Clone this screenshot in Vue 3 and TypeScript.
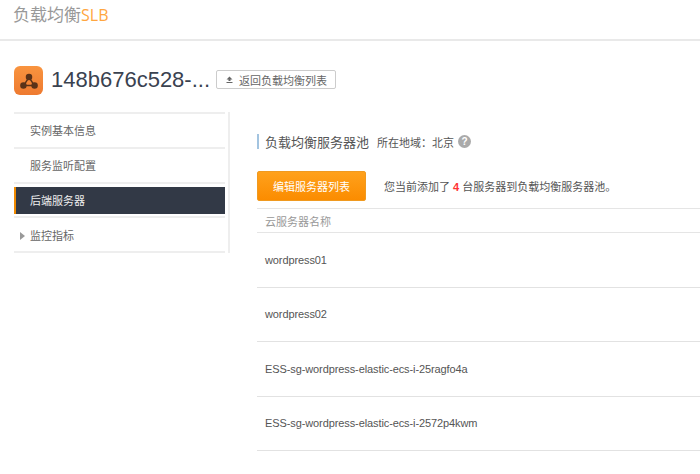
<script setup lang="ts">
const navItems = [
  { label: '实例基本信息', active: false, arrow: false },
  { label: '服务监听配置', active: false, arrow: false },
  { label: '后端服务器', active: true, arrow: false },
  { label: '监控指标', active: false, arrow: true },
]
const servers = [
  'wordpress01',
  'wordpress02',
  'ESS-sg-wordpress-elastic-ecs-i-25ragfo4a',
  'ESS-sg-wordpress-elastic-ecs-i-2572p4kwm',
]
</script>

<template>
  <div class="page">
    <header class="topbar">
      <span class="brand">负载均衡<span class="brand-accent">SLB</span></span>
    </header>
    <div class="title-row">
      <span class="logo">
        <svg width="20" height="18" viewBox="0 0 22 20">
          <path d="M11 6 L5 15 H17 Z" fill="none" stroke="#5a3218" stroke-width="1.6" />
          <circle cx="11" cy="5.5" r="3.6" fill="#5a3218" />
          <circle cx="4.8" cy="15" r="3.6" fill="#5a3218" />
          <circle cx="17.2" cy="15" r="3.6" fill="#5a3218" />
        </svg>
      </span>
      <h1 class="instance">148b676c528-...</h1>
      <button class="back">
        <svg width="9" height="9" viewBox="0 0 9 9">
          <path d="M4.5 1.5 L1.5 4.5 H3.5 V6 H5.5 V4.5 H7.5 Z M1.5 7 H7.5 V8 H1.5 Z" fill="#666" />
        </svg>
        返回负载均衡列表
      </button>
    </div>
    <div class="body">
      <nav class="side">
        <ul class="nav">
          <li v-for="item in navItems" :key="item.label" class="nav-item" :class="{ active: item.active }">
            <span v-if="item.arrow" class="arrow"></span>
            <span class="nav-label">{{ item.label }}</span>
          </li>
        </ul>
      </nav>
      <main class="content">
        <div class="section-head">
          <span class="section-title">负载均衡服务器池</span>
          <span class="region">所在地域：北京</span>
          <span class="help">?</span>
        </div>
        <div class="actions">
          <button class="edit">编辑服务器列表</button>
          <span class="note">您当前添加了 <b class="count">4</b> 台服务器到负载均衡服务器池。</span>
        </div>
        <div class="table">
          <div class="thead">云服务器名称</div>
          <div v-for="s in servers" :key="s" class="row">{{ s }}</div>
        </div>
      </main>
    </div>
  </div>
</template>

<style>
html, body { margin: 0; background: #fff; overflow: hidden; }
</style>

<style scoped>
.page {
  width: 700px;
  height: 474px;
  overflow: hidden;
  background: #fff;
  font-family: "Liberation Sans", "Noto Sans CJK SC", sans-serif;
  color: #555;
}
.topbar {
  height: 39px;
  border-bottom: 2px solid #e9e9e9;
  padding-left: 13px;
  display: flex;
  align-items: center;
}
.brand {
  font-size: 17px;
  color: #999;
  position: relative;
  top: -6px;
}
.brand-accent {
  color: #ffa640;
  font-family: "Open Sans", sans-serif;
  font-size: 16px;
}
.title-row {
  display: flex;
  align-items: center;
  height: 63px;
  padding-top: 8px;
  padding-left: 14px;
}
.logo {
  width: 29px;
  height: 29px;
  border-radius: 6px;
  background: linear-gradient(#f9943f, #ee7a30);
  display: flex;
  align-items: center;
  justify-content: center;
  flex: none;
}
.instance {
  margin: 0 0 2px 8px;
  font-size: 22px;
  font-weight: 400;
  color: #3a4250;
  white-space: nowrap;
}
.back {
  margin-left: 6px;
  margin-bottom: 2px;
  width: 120px;
  height: 19px;
  padding: 0;
  background: #fff;
  border: 1px solid #ccc;
  border-radius: 2px;
  font: inherit;
  font-size: 11px;
  color: #666;
  display: flex;
  align-items: center;
  justify-content: center;
  gap: 5px;
}
.body { display: flex; align-items: flex-start; }
.side {
  width: 214px;
  margin-left: 14px;
  border-right: 2px solid #eee;
  flex: none;
  height: 141px;
}
.nav {
  list-style: none;
  margin: 0;
  padding: 0;
  width: 211px;
  border-top: 2px solid #eee;
}
.nav-item {
  height: 33px;
  border-bottom: 2px solid #eee;
  display: flex;
  align-items: center;
  padding-left: 16px;
  font-size: 11px;
  color: #666;
  position: relative;
}
.nav-label { margin-bottom: 2px; }
.nav-item.active {
  height: 27px;
  margin-top: 3px;
  border-bottom: none;
  border-left: 2px solid #f08a00;
  padding-left: 14px;
  background: #323946;
  color: #eee;
  box-shadow: 0 2px 0 #fff, 0 4px 0 #eee;
}
.nav-item.active + .nav-item {
  margin-top: 4px;
  height: 31px;
  padding-top: 2px;
}
.arrow {
  position: absolute;
  left: 6px;
  top: 14px;
  border-left: 5px solid #999;
  border-top: 4px solid transparent;
  border-bottom: 4px solid transparent;
}
.content { margin-left: 27px; flex: 1; min-width: 0; }
.section-head {
  display: flex;
  align-items: center;
  height: 15px;
  margin-top: 22px;
  border-left: 2px solid #a3c4e0;
  padding-left: 6px;
}
.section-title { font-size: 13px; color: #555; }
.region { font-size: 11px; color: #555; margin-left: 8px; }
.help {
  width: 13px;
  height: 13px;
  border-radius: 50%;
  background: #aaa;
  color: #fff;
  font-size: 10px;
  font-weight: 700;
  line-height: 13px;
  text-align: center;
  margin-left: 4px;
}
.actions {
  display: flex;
  align-items: center;
  margin-top: 22px;
  height: 30px;
}
.edit {
  width: 109px;
  height: 30px;
  padding: 0;
  border: 1px solid #f09a20;
  border-radius: 2px;
  background: linear-gradient(#ffa11c, #fb8c00);
  color: #fff;
  font: inherit;
  font-size: 11px;
  flex: none;
}
.note { font-size: 11px; color: #555; margin-left: 18px; }
.count { color: #f33; }
.table { margin-top: 7px; }
.thead {
  height: 23px;
  border-top: 1px solid #e5e5e5;
  border-bottom: 1px solid #e5e5e5;
  display: flex;
  align-items: center;
  padding-left: 8px;
  font-size: 11px;
  color: #999;
}
.row {
  height: 53.5px;
  border-bottom: 1px solid #e2e2e2;
  display: flex;
  align-items: center;
  padding-left: 8px;
  font-size: 11px;
  letter-spacing: -0.1px;
  color: #555;
  white-space: nowrap;
}
</style>
